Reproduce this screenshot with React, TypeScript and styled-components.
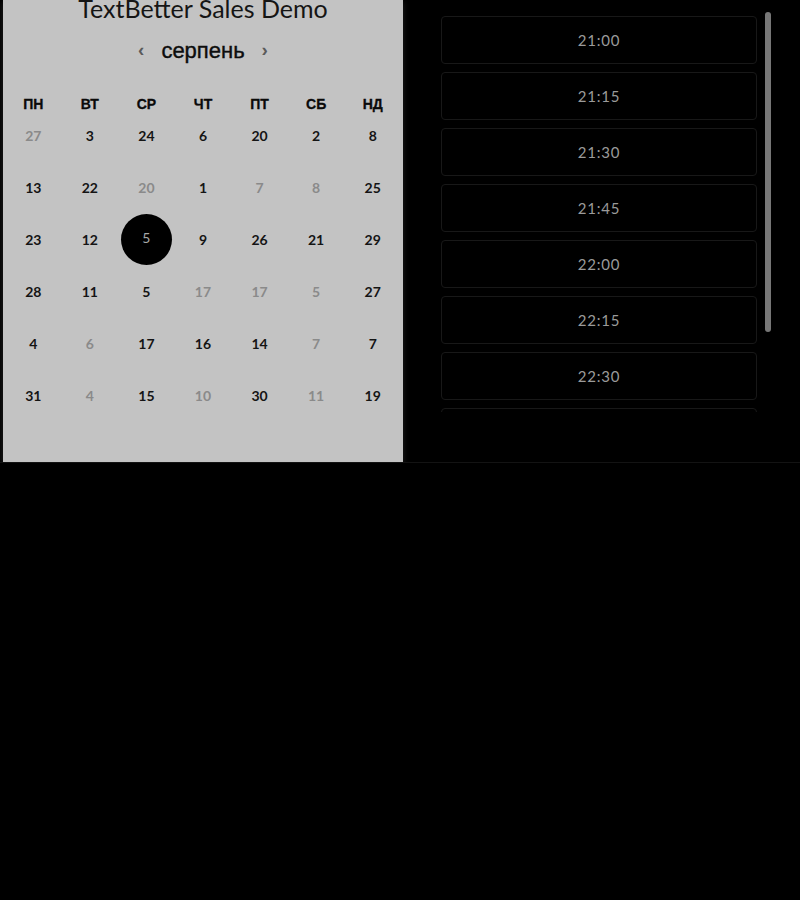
import React from "react";
import styled, { createGlobalStyle } from "styled-components";

const weekDays = ["ПН", "ВТ", "СР", "ЧТ", "ПТ", "СБ", "НД"];

// [day, muted]
const days: [number, boolean][] = [
  [27, true], [3, false], [24, false], [6, false], [20, false], [2, false], [8, false],
  [13, false], [22, false], [20, true], [1, false], [7, true], [8, true], [25, false],
  [23, false], [12, false], [5, false], [9, false], [26, false], [21, false], [29, false],
  [28, false], [11, false], [5, false], [17, true], [17, true], [5, true], [27, false],
  [4, false], [6, true], [17, false], [16, false], [14, false], [7, true], [7, false],
  [31, false], [4, true], [15, false], [10, true], [30, false], [11, true], [19, false],
];

const SELECTED = 16;

const slots = ["21:00", "21:15", "21:30", "21:45", "22:00", "22:15", "22:30", "22:45", "23:00"];

const GlobalStyle = createGlobalStyle`
  html, body {
    margin: 0;
    padding: 0;
    background: #000;
  }
  body {
    font-family: "Lato", "Liberation Sans", sans-serif;
  }
`;

const Root = styled.div`
  display: flex;
  height: 462px;
  padding-left: 3px;
  border-bottom: 1px solid #131313;
  background: #000;
  overflow: hidden;
`;

const CalendarPanel = styled.div`
  width: 400px;
  flex-shrink: 0;
  background: #c3c3c3;
  padding: 0 2px;
  box-sizing: border-box;
  box-shadow: 0 2px 6px rgba(60, 60, 60, 0.6);
`;

const Title = styled.h1`
  margin: -8px 0 0;
  text-align: center;
  font-family: "Lato", sans-serif;
  font-weight: 400;
  font-size: 25px;
  line-height: 32px;
  color: #151515;
`;

const MonthRow = styled.div`
  display: flex;
  align-items: center;
  justify-content: center;
  gap: 17px;
  margin-top: 14px;
  height: 26px;
`;

const Chevron = styled.span`
  font-family: "Liberation Sans", sans-serif;
  font-size: 19px;
  font-weight: 700;
  color: #5a5a5a;
  line-height: 1;
  padding-bottom: 3px;
`;

const MonthName = styled.span`
  font-family: "Liberation Sans", sans-serif;
  font-size: 22px;
  font-weight: 400;
  color: #0d0d0d;
  -webkit-text-stroke: 0.4px #0d0d0d;
`;

const Grid = styled.div`
  display: grid;
  grid-template-columns: repeat(7, 1fr);
`;

const WeekDay = styled.div`
  height: 10px;
  line-height: 10px;
  margin-top: 35px;
  display: flex;
  align-items: center;
  justify-content: center;
  font-family: "Liberation Sans", sans-serif;
  font-weight: 700;
  font-size: 14px;
  color: #0a0a0a;
  -webkit-text-stroke: 0.3px #0a0a0a;
`;

const DayCell = styled.div`
  height: 52px;
  display: flex;
  align-items: center;
  justify-content: center;
`;

const Day = styled.span<{ $muted?: boolean; $selected?: boolean }>`
  width: 51px;
  height: 51px;
  border-radius: 50%;
  display: flex;
  align-items: center;
  justify-content: center;
  font-family: "Lato", sans-serif;
  font-weight: ${(p) => (p.$selected ? 400 : 700)};
  font-size: 14px;
  color: ${(p) => (p.$selected ? "#a8a8a8" : p.$muted ? "#8a8a8a" : "#141414")};
  background: ${(p) => (p.$selected ? "#000" : "transparent")};
  padding-bottom: ${(p) => (p.$selected ? "3px" : "0")};
  box-sizing: border-box;
`;

const TimesColumn = styled.div`
  flex: 1;
  padding: 12px 0 0 38px;
  display: flex;
  align-items: flex-start;
  gap: 8px;
`;

const TimesViewport = styled.div`
  width: 316px;
  height: 400px;
  overflow: hidden;
`;

const SlotList = styled.div`
  display: flex;
  flex-direction: column;
  gap: 8px;
  padding-top: 4px;
`;

const Slot = styled.div`
  height: 48px;
  border: 1px solid #181818;
  border-radius: 4px;
  box-sizing: border-box;
  display: flex;
  align-items: center;
  justify-content: center;
  font-family: "Lato", sans-serif;
  font-size: 15px;
  letter-spacing: 0.8px;
  color: #9a9a9a;
`;

const ScrollTrack = styled.div`
  width: 6px;
  height: 400px;
`;

const ScrollThumb = styled.div`
  width: 6px;
  height: 320px;
  border-radius: 3px;
  background: #777;
`;

const App = () => {
  return (
    <>
      <GlobalStyle />
      <Root>
        <CalendarPanel>
          <Title>TextBetter Sales Demo</Title>
          <MonthRow>
            <Chevron>‹</Chevron>
            <MonthName>серпень</MonthName>
            <Chevron>›</Chevron>
          </MonthRow>
          <Grid>
            {weekDays.map((w) => (
              <WeekDay key={w}>{w}</WeekDay>
            ))}
            {days.map(([d, muted], i) => (
              <DayCell key={i}>
                <Day $muted={muted} $selected={i === SELECTED}>
                  {d}
                </Day>
              </DayCell>
            ))}
          </Grid>
        </CalendarPanel>
        <TimesColumn>
          <TimesViewport>
            <SlotList>
              {slots.map((s) => (
                <Slot key={s}>{s}</Slot>
              ))}
            </SlotList>
          </TimesViewport>
          <ScrollTrack>
            <ScrollThumb />
          </ScrollTrack>
        </TimesColumn>
      </Root>
    </>
  );
};

export default App;
